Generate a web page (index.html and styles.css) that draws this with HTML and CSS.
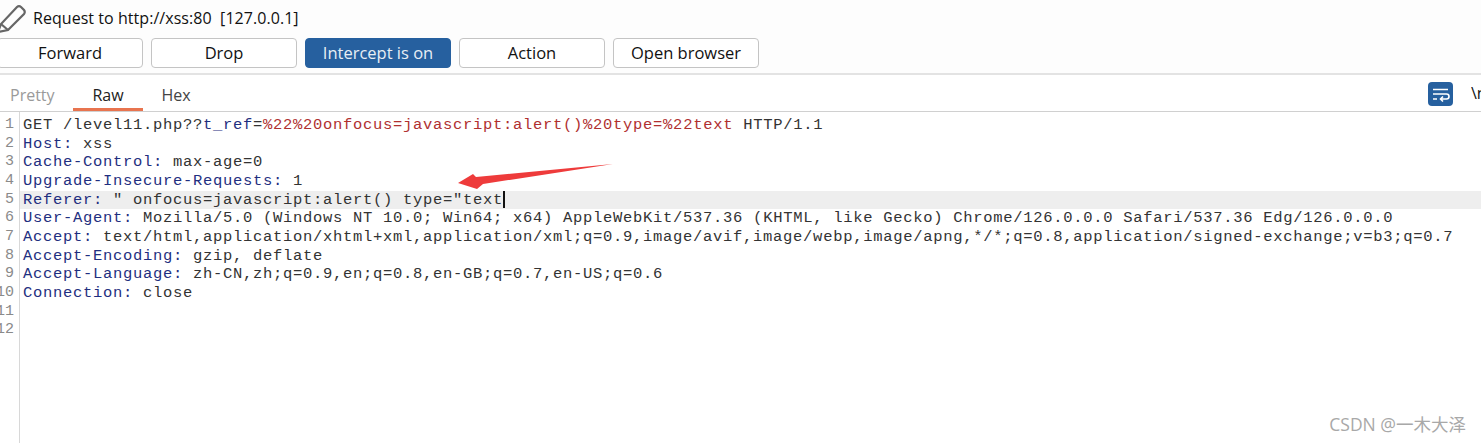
FILE: index.html
```html
<!DOCTYPE html>
<html lang="en">
<head>
<meta charset="utf-8">
<title>Request to http://xss:80</title>
<link rel="stylesheet" href="styles.css">
</head>
<body>
<div class="app">
  <header class="title">
    <svg class="pencil" width="26" height="32" viewBox="0 0 26 32" fill="none" stroke="#666" stroke-width="2.200">
      <path d="M-2 30 L1 22 L17 5 Q19 3 21 5 L24 8 Q25.500 10 24 12 L8 28 Z"/>
      <path d="M1 22 L8 28"/>
    </svg>
    <span>Request to http://xss:80&nbsp; [127.0.0.1]</span>
  </header>
  <nav class="toolbar">
    <button class="btn">Forward</button>
    <button class="btn">Drop</button>
    <button class="btn on">Intercept is on</button>
    <button class="btn">Action</button>
    <button class="btn">Open browser</button>
  </nav>
  <div class="tabs">
    <span class="tab dim">Pretty</span>
    <span class="tab active">Raw</span>
    <span class="tab">Hex</span>
    <span class="spacer"></span>
    <svg class="wrap" width="25" height="24" viewBox="0 0 25 24">
      <rect width="25" height="24" rx="4" fill="#26609f"/>
      <path d="M5 7.500H20M5 12H18.500Q21 12 21 14.500Q21 17 18.500 17H13M15 14.500L12.500 17L15 19.500M5 17H9" fill="none" stroke="#fff" stroke-width="1.600"/>
    </svg>
    <span class="newline">\n</span>
  </div>
  <main class="editor">
    <ol class="gutter">
      <li>1</li><li>2</li><li>3</li><li>4</li><li>5</li><li>6</li><li>7</li><li>8</li><li>9</li><li>10</li><li>11</li><li>12</li>
    </ol>
    <div class="code">
      <div class="line">GET /level11.php??<span class="name">t_ref</span>=<span class="val">%22%20onfocus=javascript:alert()%20type=%22text</span> HTTP/1.1</div>
      <div class="line"><span class="name">Host:</span> xss</div>
      <div class="line"><span class="name">Cache-Control:</span> max-age=0</div>
      <div class="line"><span class="name">Upgrade-Insecure-Requests:</span> 1</div>
      <div class="line current"><span class="name">Referer:</span> " onfocus=javascript:alert() type="text<span class="caret"></span></div>
      <div class="line"><span class="name">User-Agent:</span> Mozilla/5.0 (Windows NT 10.0; Win64; x64) AppleWebKit/537.36 (KHTML, like Gecko) Chrome/126.0.0.0 Safari/537.36 Edg/126.0.0.0</div>
      <div class="line"><span class="name">Accept:</span> text/html,application/xhtml+xml,application/xml;q=0.9,image/avif,image/webp,image/apng,*/*;q=0.8,application/signed-exchange;v=b3;q=0.7</div>
      <div class="line"><span class="name">Accept-Encoding:</span> gzip, deflate</div>
      <div class="line"><span class="name">Accept-Language:</span> zh-CN,zh;q=0.9,en;q=0.8,en-GB;q=0.7,en-US;q=0.6</div>
      <div class="line"><span class="name">Connection:</span> close</div>
    </div>
  </main>
  <svg class="arrow" width="156" height="28" viewBox="0 0 156 28">
    <path d="M0 20 L15 11 L18 14 L155 1 L25 21 L19 26 Z" fill="#ee3b3b"/>
  </svg>
  <div class="mark">CSDN @一木大泽</div>
</div>
</body>
</html>
```
FILE: styles.css
```css
* { box-sizing: border-box; }
html, body { margin: 0; padding: 0; }
body { background: #fff; font-family: "Open Sans", "Noto Sans", sans-serif; color: #222; }
.app { position: relative; width: 1481px; height: 443px; overflow: hidden; display: flex; flex-direction: column; }
.title { height: 36px; display: flex; align-items: center; gap: 7px; font-size: 16px; background: #fdfdfd; }
.title span { letter-spacing: 0.05px; color: #111; }
.pencil { flex: none; }
.toolbar { height: 39px; display: flex; gap: 8px; margin-left: -3px; padding-top: 2px; border-bottom: 2px solid #e3e3e3; background: #fdfdfd; }
.btn { width: 146px; height: 30px; border: 1px solid #c4c4c4; border-radius: 4px; background: #fff; color: #111; font: 16.5px "Open Sans", sans-serif; padding: 0 0 2px; }
.btn.on { background: #26609f; border-color: #26609f; color: #e8eef5; }
.tabs { height: 37px; display: flex; align-items: center; border-bottom: 1px solid #d0d0d0; font-size: 16px; }
.tab { display: flex; align-items: center; justify-content: center; height: 36px; padding-top: 4px; width: 70px; color: #444; }
.tab.dim { width: 66px; justify-content: flex-start; padding-left: 10px; color: #9a9a9a; margin-right: 7px; }
.tab.active { color: #222; border-bottom: 3px solid #e8744f; padding-top: 7px; margin-right: -2px; }
.spacer { flex: 1; }
.wrap { margin-right: 18px; margin-top: 1px; }
.newline { width: 10px; overflow: hidden; color: #111; }
.editor { flex: 1; display: flex; font-family: "Liberation Mono", monospace; font-size: 15.5px; line-height: 18.67px; padding-top: 4px; }
.gutter { list-style: none; margin: -4px 0 0; padding: 4px 5px 0 0; width: 20px; flex: none; border-right: 1px solid #d8d8d8; text-align: right; color: #8a8a8a; font-size: 15px; }
.gutter li { white-space: nowrap; direction: rtl; }
.code { flex: 1; min-width: 0; color: #333; letter-spacing: 0.7px; }
.line { padding-left: 3px; height: 18.67px; white-space: pre; }
.current { background: #eeeeee; }
.name { color: #1f2f80; }
.val { color: #b03030; }
.caret { display: inline-block; width: 2px; height: 17px; background: #111; vertical-align: -4px; }
.arrow { position: absolute; left: 458px; top: 163px; }
.mark { position: absolute; right: 15px; top: 411px; font-size: 17.5px; font-family: "Open Sans", "Noto Sans CJK SC", sans-serif; color: #a8a8a8; }
```
